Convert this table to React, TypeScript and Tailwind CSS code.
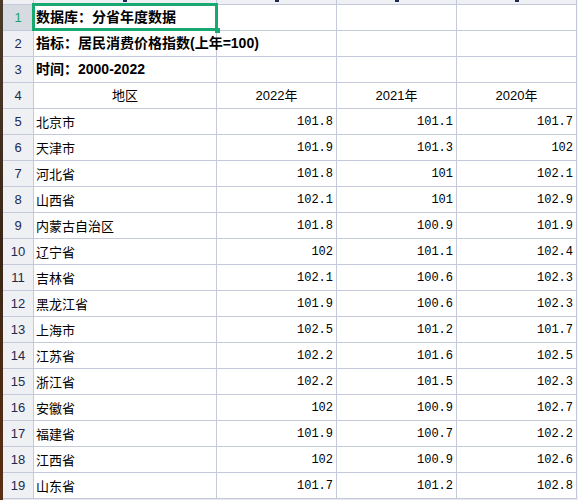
import React from 'react';

const rows: [string, string, string, string][] = [
  ['北京市', '101.8', '101.1', '101.7'],
  ['天津市', '101.9', '101.3', '102'],
  ['河北省', '101.8', '101', '102.1'],
  ['山西省', '102.1', '101', '102.9'],
  ['内蒙古自治区', '101.8', '100.9', '101.9'],
  ['辽宁省', '102', '101.1', '102.4'],
  ['吉林省', '102.1', '100.6', '102.3'],
  ['黑龙江省', '101.9', '100.6', '102.3'],
  ['上海市', '102.5', '101.2', '101.7'],
  ['江苏省', '102.2', '101.6', '102.5'],
  ['浙江省', '102.2', '101.5', '102.3'],
  ['安徽省', '102', '100.9', '102.7'],
  ['福建省', '101.9', '100.7', '102.2'],
  ['江西省', '102', '100.9', '102.6'],
  ['山东省', '101.7', '101.2', '102.8'],
];

const cjk = { fontFamily: '"Noto Sans CJK SC", sans-serif' };
const sansCjk = { fontFamily: '"Liberation Sans", "Noto Sans CJK SC", sans-serif' };
const mono = { fontFamily: '"Liberation Mono", monospace' };

const gridCols = 'grid grid-cols-[31px_183px_120px_120px_120px]';
const cell = 'border-r border-b border-[#c4c9dc] h-[26px] flex items-center';

const RowNum: React.FC<{ n: number; active?: boolean }> = ({ n, active }) => (
  <div
    className={`${cell} justify-center text-[13px] ${active ? 'bg-[#d6dae1] text-[#1e9f6e]' : 'bg-[#eef0f4] text-[#1d2a4f]'}`}
    style={sansCjk}
  >
    {n}
  </div>
);

const Empty: React.FC = () => <div className={`${cell} bg-white`} />;

export default function App() {
  return (
    <div className="w-[578px] h-[500px] bg-[#e6e8ec] overflow-hidden flex">
      <div className="w-[3px] shrink-0 bg-gradient-to-b from-[#4a3a2a] via-[#3a2616] to-[#5a2e12]" />
      <div className="flex flex-col">
        {/* column headers, only the bottom edge of each letter is in view */}
        <div className={`${gridCols} h-[5px]`}>
          {[false, true, true, true, true].map((mark, i) => (
            <div
              key={i}
              className="border-r border-b border-[#c4c9dc] bg-[#eef0f4] h-[5px] flex justify-center items-start"
            >
              {mark && <div className="w-[4px] h-[2px] bg-[#1d2a4f]" />}
            </div>
          ))}
        </div>

        <div className={gridCols}>
          <RowNum n={1} active />
          <div className={`${cell} bg-white relative z-20`}>
            <span className="pl-[2px] text-[14px] font-bold text-black whitespace-nowrap" style={sansCjk}>
              数据库：分省年度数据
            </span>
            <div className="absolute left-[-2px] top-[-2px] right-[-2px] bottom-[-1px] border-[3px] border-solid border-[#17a96f]" />
            <div className="absolute right-[-4px] bottom-[-3px] w-[5px] h-[5px] bg-[#17a96f]" />
          </div>
          <Empty />
          <Empty />
          <Empty />

          <RowNum n={2} />
          <div className={`${cell} bg-white overflow-visible z-10`}>
            <span className="pl-[2px] text-[14px] font-bold text-black whitespace-nowrap" style={sansCjk}>
              指标：居民消费价格指数(上年=100)
            </span>
          </div>
          <div className="border-b border-r border-[#c4c9dc] h-[26px] bg-white" />
          <Empty />
          <Empty />

          <RowNum n={3} />
          <div className={`${cell} bg-white`}>
            <span className="pl-[2px] text-[14px] font-bold text-black whitespace-nowrap" style={sansCjk}>
              时间：2000-2022
            </span>
          </div>
          <Empty />
          <Empty />
          <Empty />

          <RowNum n={4} />
          {['地区', '2022年', '2021年', '2020年'].map((h) => (
            <div key={h} className={`${cell} bg-white justify-center text-[13px] text-black`} style={sansCjk}>
              {h}
            </div>
          ))}

          {rows.map((r, i) => (
            <React.Fragment key={r[0]}>
              <RowNum n={i + 5} />
              <div className={`${cell} bg-white pl-[2px] text-[13px] text-black`} style={cjk}>
                {r[0]}
              </div>
              {r.slice(1).map((v, j) => (
                <div key={j} className={`${cell} bg-white justify-end pr-[3px] text-[12px] text-black`} style={mono}>
                  {v}
                </div>
              ))}
            </React.Fragment>
          ))}
        </div>
      </div>
      <div className="w-px bg-[#f4f5f7] h-[499px]" />
    </div>
  );
}
